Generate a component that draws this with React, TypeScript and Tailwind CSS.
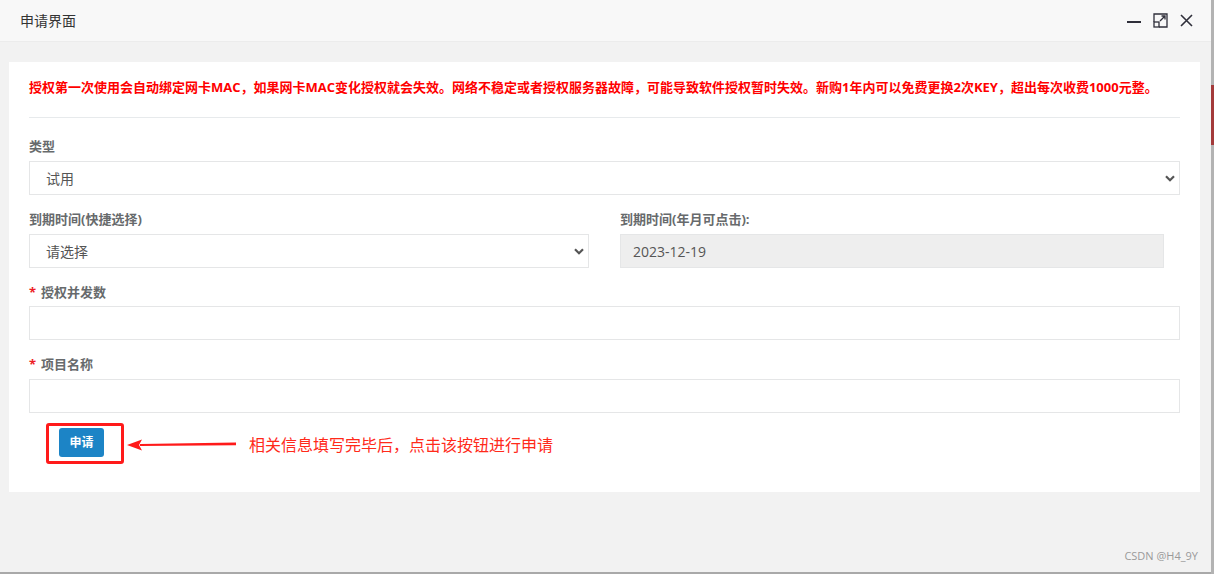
const font = {
  fontFamily: '"Open Sans", "Noto Sans CJK SC", sans-serif',
};

function Chevron() {
  return (
    <svg width="10" height="7" viewBox="0 0 10 7" className="shrink-0">
      <path d="M1 1.2 L5 5.2 L9 1.2" fill="none" stroke="#555" strokeWidth="2.2" />
    </svg>
  );
}

function SelectBox({ value, className }: { value: string; className: string }) {
  return (
    <div
      className={`flex h-[34px] items-center justify-between border border-[#e5e6e7] bg-white pl-[16px] pr-[4px] text-[14px] text-[#555] ${className}`}
    >
      <span>{value}</span>
      <Chevron />
    </div>
  );
}

function Label({ text, required }: { text: string; required?: boolean }) {
  return (
    <div className="flex h-[18px] items-center text-[13px] font-bold leading-[18px] text-[#676a6c]">
      {required && <span className="mr-[5px] text-[#ed1c24]">*</span>}
      {text}
    </div>
  );
}

export default function App() {
  return (
    <div
      className="relative flex h-[574px] w-[1214px] flex-col overflow-hidden bg-[#f2f2f2]"
      style={font}
    >
      {/* title bar */}
      <div className="flex h-[42px] shrink-0 items-center justify-between border-b border-[#ececec] bg-[#f8f8f8] pl-[20px] pr-[20px]">
        <span className="text-[14px] text-[#333]">申请界面</span>
        <div className="flex items-center gap-[12px] pr-[1px]">
          <svg width="14" height="14" viewBox="0 0 14 14">
            <path d="M0 8 H14" stroke="#2f2f3a" strokeWidth="2" />
          </svg>
          <svg width="15" height="15" viewBox="0 0 15 15">
            <path d="M1 5 V1 H14 V14 H10" fill="none" stroke="#2f2f3a" strokeWidth="1.3" />
            <rect x="1" y="9" width="5" height="5" fill="none" stroke="#2f2f3a" strokeWidth="1.3" />
            <path d="M1 9 V5 M6 14 H10" fill="none" stroke="#2f2f3a" strokeWidth="1.3" />
            <path d="M7 8 L12 3 M8.5 3 H12 V6.5" fill="none" stroke="#2f2f3a" strokeWidth="1.3" />
          </svg>
          <svg width="13" height="13" viewBox="0 0 13 13">
            <path d="M1 1 L12 12 M12 1 L1 12" stroke="#2f2f3a" strokeWidth="1.6" />
          </svg>
        </div>
      </div>

      {/* content */}
      <div className="pl-[9px] pr-[14px] pt-[20px]">
        <div className="h-[430px] w-[1191px] bg-white px-[20px] pt-[16px]">
          <p className="text-[13px] font-bold leading-[18px] text-[#ff0000]">
            授权第一次使用会自动绑定网卡MAC，如果网卡MAC变化授权就会失效。网络不稳定或者授权服务器故障，可能导致软件授权暂时失效。新购1年内可以免费更换2次KEY，超出每次收费1000元整。
          </p>
          <div className="mt-[21px] h-px w-[1151px] bg-[#e7eaec]" />

          <div className="mt-[19px]">
            <Label text="类型" />
            <SelectBox value="试用" className="mt-[6px] w-[1151px]" />
          </div>

          <div className="mt-[15px] flex gap-[31px]">
            <div className="w-[560px]">
              <Label text="到期时间(快捷选择)" />
              <SelectBox value="请选择" className="mt-[6px] w-[560px]" />
            </div>
            <div className="w-[544px]">
              <Label text="到期时间(年月可点击):" />
              <div className="mt-[6px] flex h-[34px] items-center border border-[#e5e6e7] bg-[#eeeeee] pl-[12px] text-[14px] text-[#555]">
                2023-12-19
              </div>
            </div>
          </div>

          <div className="mt-[15px]">
            <Label text="授权并发数" required />
            <div className="mt-[5px] h-[34px] w-[1151px] border border-[#e5e6e7] bg-white" />
          </div>

          <div className="mt-[15px]">
            <Label text="项目名称" required />
            <div className="mt-[6px] h-[34px] w-[1151px] border border-[#e5e6e7] bg-white" />
          </div>

          <div className="ml-[17px] mt-[10px] flex items-center">
            <div className="rounded-[3px] border-[3px] border-[#ff1a1a] pb-[4px] pl-[10px] pr-[17px] pt-[2px]">
              <div className="flex h-[29px] w-[45px] items-center justify-center rounded-[3px] bg-[#1c84c6] text-[12px] font-bold text-white">
                申请
              </div>
            </div>
            <svg width="110" height="14" viewBox="0 0 110 14" className="ml-[2px] mt-[2px]">
              <path d="M14 6 L110 4.6 L110 7.2 L14 8 Z" fill="#ff1a1a" />
              <path d="M1 7 L16 1.5 L13 7 L16 12.5 Z" fill="#ff1a1a" />
            </svg>
            <span className="ml-[13px] mt-[3px] text-[16px] text-[#ff2a1a]">
              相关信息填写完毕后，点击该按钮进行申请
            </span>
          </div>
        </div>
      </div>

      <div className="flex-1" />
      <div className="flex justify-end pb-[8px] pr-[16px] text-[11px] text-[#9a9a9a]">CSDN @H4_9Y</div>
      <div className="h-[2px] shrink-0 bg-[#a9a9a9]" />

      {/* background window scrollbar edge */}
      <div className="absolute right-0 top-0 h-full w-[3px] bg-[#b3b3b3]">
        <div className="mt-[85px] h-[60px] w-full bg-[#a33a3a]" />
      </div>
    </div>
  );
}
